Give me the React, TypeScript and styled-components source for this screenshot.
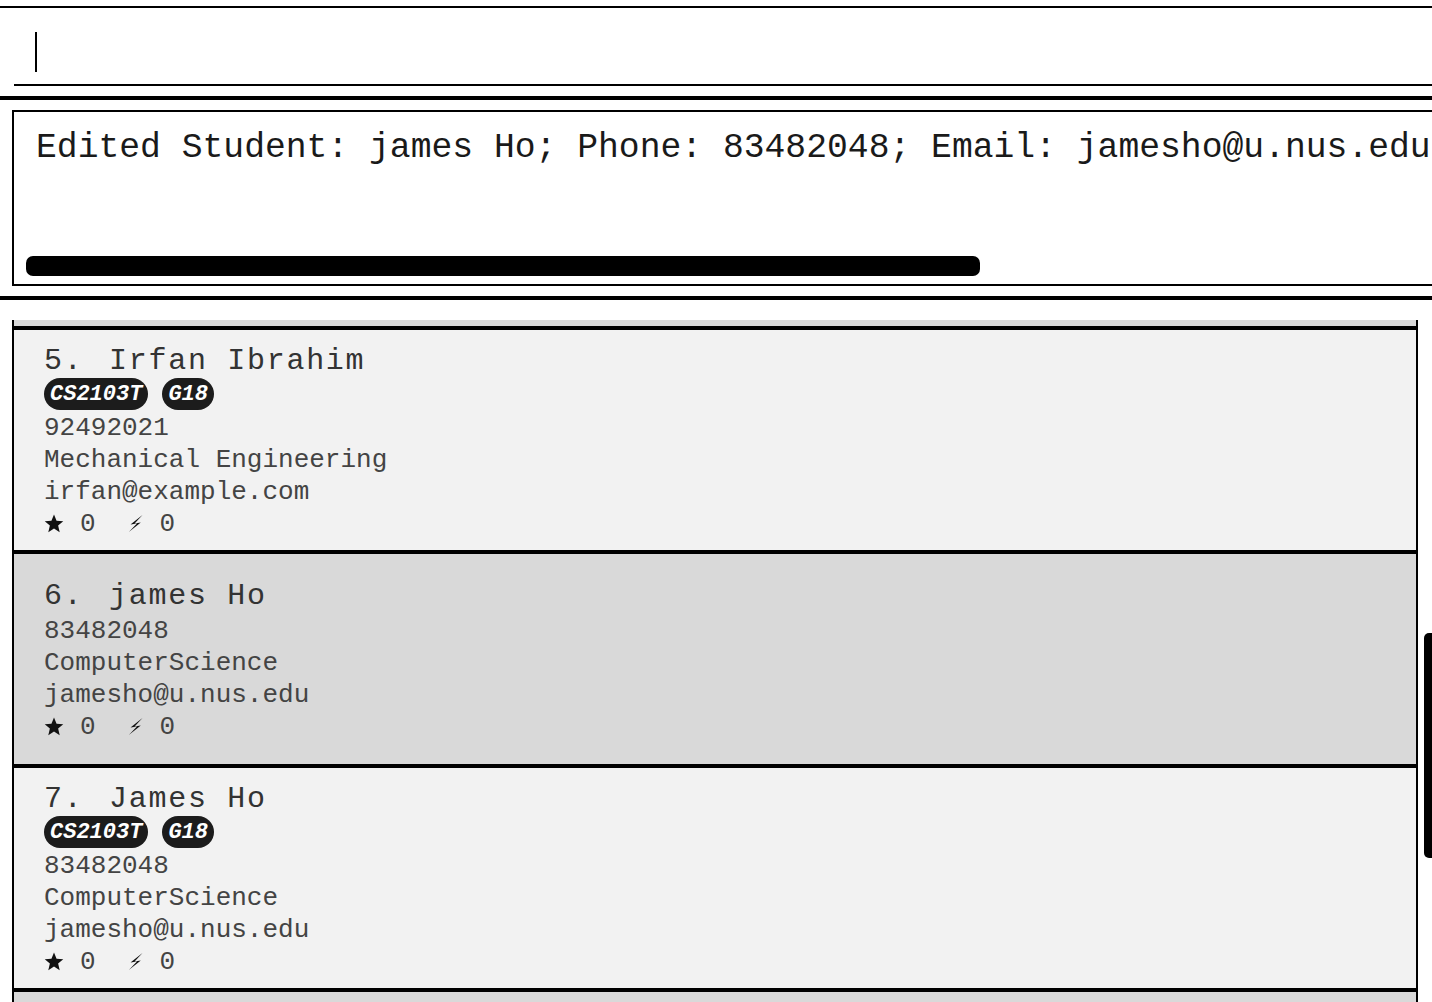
import React from "react";
import styled, { createGlobalStyle } from "styled-components";

const GlobalStyle = createGlobalStyle`
  html, body {
    margin: 0;
    padding: 0;
    background: #ffffff;
    overflow: hidden;
  }
  body {
    font-family: "Liberation Mono", "Courier New", monospace;
  }
  #root {
    width: 1432px;
    height: 1002px;
    overflow: hidden;
  }
`;

const Page = styled.div`
  width: 1432px;
  height: 1002px;
  padding-top: 6px;
  box-sizing: border-box;
  display: flex;
  flex-direction: column;
  overflow: hidden;
`;

const Rule = styled.div<{ $thick?: boolean; $after?: number }>`
  height: ${(p) => (p.$thick ? 4 : 2)}px;
  background: #000;
  flex: none;
  margin-bottom: ${(p) => p.$after ?? 0}px;
`;

const CommandRow = styled.div`
  margin-left: 14px;
  height: 76px;
  border-bottom: 2px solid #000;
  padding-left: 21px;
  display: flex;
  align-items: flex-start;
  flex: none;
  margin-bottom: 10px;
`;

const Caret = styled.div`
  width: 2px;
  height: 40px;
  margin-top: 24px;
  background: #000;
`;

const StatusBox = styled.div`
  margin-left: 12px;
  width: 1440px;
  height: 176px;
  box-sizing: border-box;
  border: 2px solid #000;
  display: flex;
  flex-direction: column;
  flex: none;
  margin-bottom: 10px;
`;

const StatusText = styled.div`
  padding: 16px 0 0 22px;
  font-size: 34.7px;
  line-height: 40px;
  color: #1a1a1a;
  white-space: nowrap;
  flex: 1;
`;

const HScrollThumb = styled.div`
  margin: 0 0 8px 12px;
  width: 954px;
  height: 20px;
  border-radius: 7px;
  background: #000;
`;

const ListArea = styled.div`
  margin-top: 20px;
  flex: 1;
  display: flex;
  min-height: 0;
`;

const ListViewport = styled.div`
  margin-left: 12px;
  width: 1406px;
  overflow: hidden;
  display: flex;
  flex-direction: column;
`;

const ListInner = styled.div<{ $offset: number }>`
  margin-top: ${(p) => -p.$offset}px;
  display: flex;
  flex-direction: column;
`;

const ScrollTrack = styled.div`
  margin-left: 6px;
  width: 8px;
  padding-top: 313px;
`;

const ScrollThumb = styled.div`
  width: 8px;
  height: 225px;
  background: #000;
  border-radius: 5px 0 0 5px;
`;

const Card = styled.div<{ $even: boolean }>`
  box-sizing: border-box;
  min-height: 214px;
  border: 2px solid #000;
  background: ${(p) => (p.$even ? "#d9d9d9" : "#f2f2f2")};
  padding: 14px 30px 10px 30px;
  display: flex;
  flex-direction: column;
  justify-content: center;
  color: #3c3c3c;
  flex: none;
`;

const NameLine = styled.div`
  font-size: 30px;
  line-height: 34px;
  letter-spacing: 1.7px;
  white-space: nowrap;
  color: #333;
`;

const NameText = styled.span`
  margin-left: 6px;
`;

const Tags = styled.div`
  display: flex;
  gap: 14px;
  height: 32px;
  align-items: center;
`;

const Tag = styled.span`
  height: 32px;
  padding: 0 6px;
  border-radius: 16px;
  background: #1c1c1c;
  color: #fff;
  font-size: 22px;
  font-weight: bold;
  font-style: italic;
  line-height: 33px;
  white-space: nowrap;
`;

const Details = styled.div`
  margin-top: 2px;
  display: flex;
  flex-direction: column;
`;

const Detail = styled.div`
  font-size: 26px;
  line-height: 32px;
  white-space: nowrap;
  color: #444;
`;

const Stats = styled.div`
  height: 32px;
  display: flex;
  align-items: center;
  font-size: 26px;
  color: #444;
`;

const Stat = styled.div<{ $gap: number; $lead: number }>`
  display: flex;
  align-items: center;
  gap: ${(p) => p.$gap}px;
  margin-left: ${(p) => p.$lead}px;
`;

const StarIcon = () => (
  <svg width="20" height="19" viewBox="0 0 24 23" style={{ marginTop: -1 }}>
    <path
      d="M12 0.5l3.1 7.6 8.1 0.6-6.2 5.3 1.9 8-6.9-4.3-6.9 4.3 1.9-8L0.8 8.7l8.1-0.6z"
      fill="#111"
    />
  </svg>
);

const BoltIcon = () => (
  <svg width="15" height="17" viewBox="0 0 15 17" style={{ marginTop: -1 }}>
    <path d="M14.5 0 L2.5 9.4 L9 8.4 L0.8 17 L12.8 7.4 L6.6 8.4 Z" fill="#111" />
  </svg>
);

type Student = {
  id: number;
  name: string;
  tags: string[];
  phone: string;
  major: string;
  email: string;
};

const students: Student[] = [
  {
    id: 4,
    name: "David Li",
    tags: ["CS2103T", "G18"],
    phone: "91031282",
    major: "Computer Engineering",
    email: "lidavid@example.com",
  },
  {
    id: 5,
    name: "Irfan Ibrahim",
    tags: ["CS2103T", "G18"],
    phone: "92492021",
    major: "Mechanical Engineering",
    email: "irfan@example.com",
  },
  {
    id: 6,
    name: "james Ho",
    tags: [],
    phone: "83482048",
    major: "ComputerScience",
    email: "jamesho@u.nus.edu",
  },
  {
    id: 7,
    name: "James Ho",
    tags: ["CS2103T", "G18"],
    phone: "83482048",
    major: "ComputerScience",
    email: "jamesho@u.nus.edu",
  },
  {
    id: 8,
    name: "Roy Balakrishnan",
    tags: ["CS2103T", "G18"],
    phone: "92624417",
    major: "Business Analytics",
    email: "royb@example.com",
  },
];

const StudentCard = ({ s }: { s: Student }) => (
  <Card $even={s.id % 2 === 0}>
    <NameLine>
      {s.id}. <NameText>{s.name}</NameText>
    </NameLine>
    {s.tags.length > 0 && (
      <Tags>
        {s.tags.map((t) => (
          <Tag key={t}>{t}</Tag>
        ))}
      </Tags>
    )}
    <Details>
      <Detail>{s.phone}</Detail>
      <Detail>{s.major}</Detail>
      <Detail>{s.email}</Detail>
      <Stats>
        <Stat $gap={16} $lead={0}>
          <StarIcon />
          <span>0</span>
        </Stat>
        <Stat $gap={17} $lead={32}>
          <BoltIcon />
          <span>0</span>
        </Stat>
      </Stats>
    </Details>
  </Card>
);

export default function App() {
  return (
    <>
      <GlobalStyle />
      <Page>
        <Rule />
        <CommandRow>
          <Caret />
        </CommandRow>
        <Rule $thick $after={10} />
        <StatusBox>
          <StatusText>
            Edited Student: james Ho; Phone: 83482048; Email: jamesho@u.nus.edu
          </StatusText>
          <HScrollThumb />
        </StatusBox>
        <Rule $thick />
        <ListArea>
          <ListViewport>
            <ListInner $offset={216}>
              {students.map((s) => (
                <StudentCard key={s.id} s={s} />
              ))}
            </ListInner>
          </ListViewport>
          <ScrollTrack>
            <ScrollThumb />
          </ScrollTrack>
        </ListArea>
      </Page>
    </>
  );
}
